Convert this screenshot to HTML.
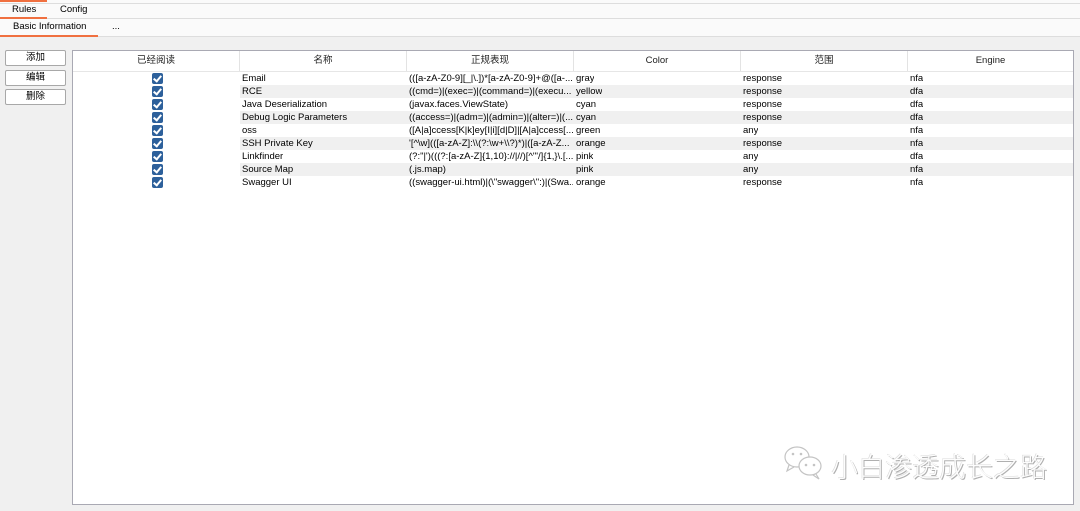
<!DOCTYPE html><html><head><meta charset="utf-8"><style>
body{margin:0;width:1080px;height:511px;background:#f0f0f0;font-family:"Liberation Sans","Noto Sans CJK SC",sans-serif;font-size:9.5px;color:#000;position:relative;overflow:hidden}
.a{position:absolute}
.btn{position:absolute;left:5px;width:59px;height:14px;border:1px solid #a8a8a8;background:#fff;border-radius:2px;text-align:center;line-height:14px;font-size:9.5px}
.tbl{position:absolute;left:72px;top:50px;width:1000px;height:453px;border:1px solid #a9a9b3;background:#fff}
.hd{position:absolute;top:0;height:20px;line-height:20px;text-align:center;border-right:1px solid #e3e3e3;font-size:9.5px;color:#222}
.row{position:absolute;left:0;width:1000px;height:13px;line-height:13px}
.row.s .sh{position:absolute;left:167px;right:0;top:0;bottom:0;background:#f0f0f0}
.c{position:absolute;top:0;white-space:nowrap;overflow:hidden}
.cb{position:absolute;left:79px;top:1px;width:11px;height:11px;background:#2d609b;border-radius:2px}
.cb::after{content:"";position:absolute;left:3px;top:1px;width:3px;height:6px;border:solid #fff;border-width:0 2px 2px 0;transform:rotate(40deg)}
</style></head><body>
<div class="a" style="left:0;top:0;width:1080px;height:36px;background:#fafafa"></div>
<div class="a" style="left:0;top:3px;width:1080px;height:1px;background:#ddd"></div>
<div class="a" style="left:0;top:0;width:47px;height:2px;background:#f07040"></div>
<div class="a" style="left:12px;top:4px">Rules</div>
<div class="a" style="left:60px;top:4px">Config</div>
<div class="a" style="left:0;top:18px;width:1080px;height:1px;background:#ddd"></div>
<div class="a" style="left:0;top:17px;width:47px;height:2px;background:#f07040;z-index:2"></div>
<div class="a" style="left:13px;top:21px">Basic Information</div>
<div class="a" style="left:112px;top:21px">...</div>
<div class="a" style="left:0;top:36px;width:1080px;height:1px;background:#ddd"></div>
<div class="a" style="left:0;top:35px;width:98px;height:2px;background:#f07040;z-index:2"></div>
<div class="btn" style="top:50px">添加</div>
<div class="btn" style="top:70px">编辑</div>
<div class="btn" style="top:89px">删除</div>
<div class="tbl">
<div class="a" style="left:0;top:20px;width:1000px;height:1px;background:#e6e6e6"></div>
<div class="hd" style="left:0;width:166px">已经阅读</div>
<div class="hd" style="left:167px;width:166px">名称</div>
<div class="hd" style="left:334px;width:166px">正规表现</div>
<div class="hd" style="left:501px;width:166px">Color</div>
<div class="hd" style="left:668px;width:166px">范围</div>
<div class="hd" style="left:835px;width:165px;border:0">Engine</div>
<div class="row" style="top:21px"><div class="cb"></div><div class="c" style="left:169px">Email</div><div class="c" style="left:336px;width:164px">(([a-zA-Z0-9][_|\.])*[a-zA-Z0-9]+@([a-...</div><div class="c" style="left:503px">gray</div><div class="c" style="left:670px">response</div><div class="c" style="left:837px">nfa</div></div>
<div class="row s" style="top:34px"><div class="sh"></div><div class="cb"></div><div class="c" style="left:169px">RCE</div><div class="c" style="left:336px;width:164px">((cmd=)|(exec=)|(command=)|(execu...</div><div class="c" style="left:503px">yellow</div><div class="c" style="left:670px">response</div><div class="c" style="left:837px">dfa</div></div>
<div class="row" style="top:47px"><div class="cb"></div><div class="c" style="left:169px">Java Deserialization</div><div class="c" style="left:336px;width:164px">(javax.faces.ViewState)</div><div class="c" style="left:503px">cyan</div><div class="c" style="left:670px">response</div><div class="c" style="left:837px">dfa</div></div>
<div class="row s" style="top:60px"><div class="sh"></div><div class="cb"></div><div class="c" style="left:169px">Debug Logic Parameters</div><div class="c" style="left:336px;width:164px">((access=)|(adm=)|(admin=)|(alter=)|(...</div><div class="c" style="left:503px">cyan</div><div class="c" style="left:670px">response</div><div class="c" style="left:837px">dfa</div></div>
<div class="row" style="top:73px"><div class="cb"></div><div class="c" style="left:169px">oss</div><div class="c" style="left:336px;width:164px">([A|a]ccess[K|k]ey[I|i][d|D]|[A|a]ccess[...</div><div class="c" style="left:503px">green</div><div class="c" style="left:670px">any</div><div class="c" style="left:837px">nfa</div></div>
<div class="row s" style="top:86px"><div class="sh"></div><div class="cb"></div><div class="c" style="left:169px">SSH Private Key</div><div class="c" style="left:336px;width:164px">'[^\w](([a-zA-Z]:\\(?:\w+\\?)*)|([a-zA-Z...</div><div class="c" style="left:503px">orange</div><div class="c" style="left:670px">response</div><div class="c" style="left:837px">nfa</div></div>
<div class="row" style="top:99px"><div class="cb"></div><div class="c" style="left:169px">Linkfinder</div><div class="c" style="left:336px;width:164px">(?:"|')(((?:[a-zA-Z]{1,10}://|//)[^"'/]{1,}\.[...</div><div class="c" style="left:503px">pink</div><div class="c" style="left:670px">any</div><div class="c" style="left:837px">dfa</div></div>
<div class="row s" style="top:112px"><div class="sh"></div><div class="cb"></div><div class="c" style="left:169px">Source Map</div><div class="c" style="left:336px;width:164px">(.js.map)</div><div class="c" style="left:503px">pink</div><div class="c" style="left:670px">any</div><div class="c" style="left:837px">nfa</div></div>
<div class="row" style="top:125px"><div class="cb"></div><div class="c" style="left:169px">Swagger UI</div><div class="c" style="left:336px;width:164px">((swagger-ui.html)|(\"swagger\":)|(Swa...</div><div class="c" style="left:503px">orange</div><div class="c" style="left:670px">response</div><div class="c" style="left:837px">nfa</div></div>
</div>
<svg class="a" style="left:783px;top:444px" width="44" height="38" viewBox="0 0 44 38"><g fill="none" stroke="#c4c4c4" stroke-width="1.2"><ellipse cx="14" cy="13" rx="12" ry="10"/><path d="M6 21 L4 27 L11 23"/><ellipse cx="27" cy="22" rx="11" ry="9" fill="#fff"/><path d="M33 30 L36 35 L30 31"/></g><g fill="#c4c4c4"><circle cx="10" cy="10" r="1.3"/><circle cx="18" cy="10" r="1.3"/><circle cx="23" cy="21" r="1.3"/><circle cx="31" cy="21" r="1.3"/></g></svg>
<div class="a" style="left:831px;top:446px;font-size:27px;color:#fdfdfd;text-shadow:1px 1px 0 #b0b0b0,-0.5px -0.5px 0 #d8d8d8;font-family:'Noto Sans CJK SC',sans-serif;font-weight:300">小白渗透成长之路</div>
</body></html>
